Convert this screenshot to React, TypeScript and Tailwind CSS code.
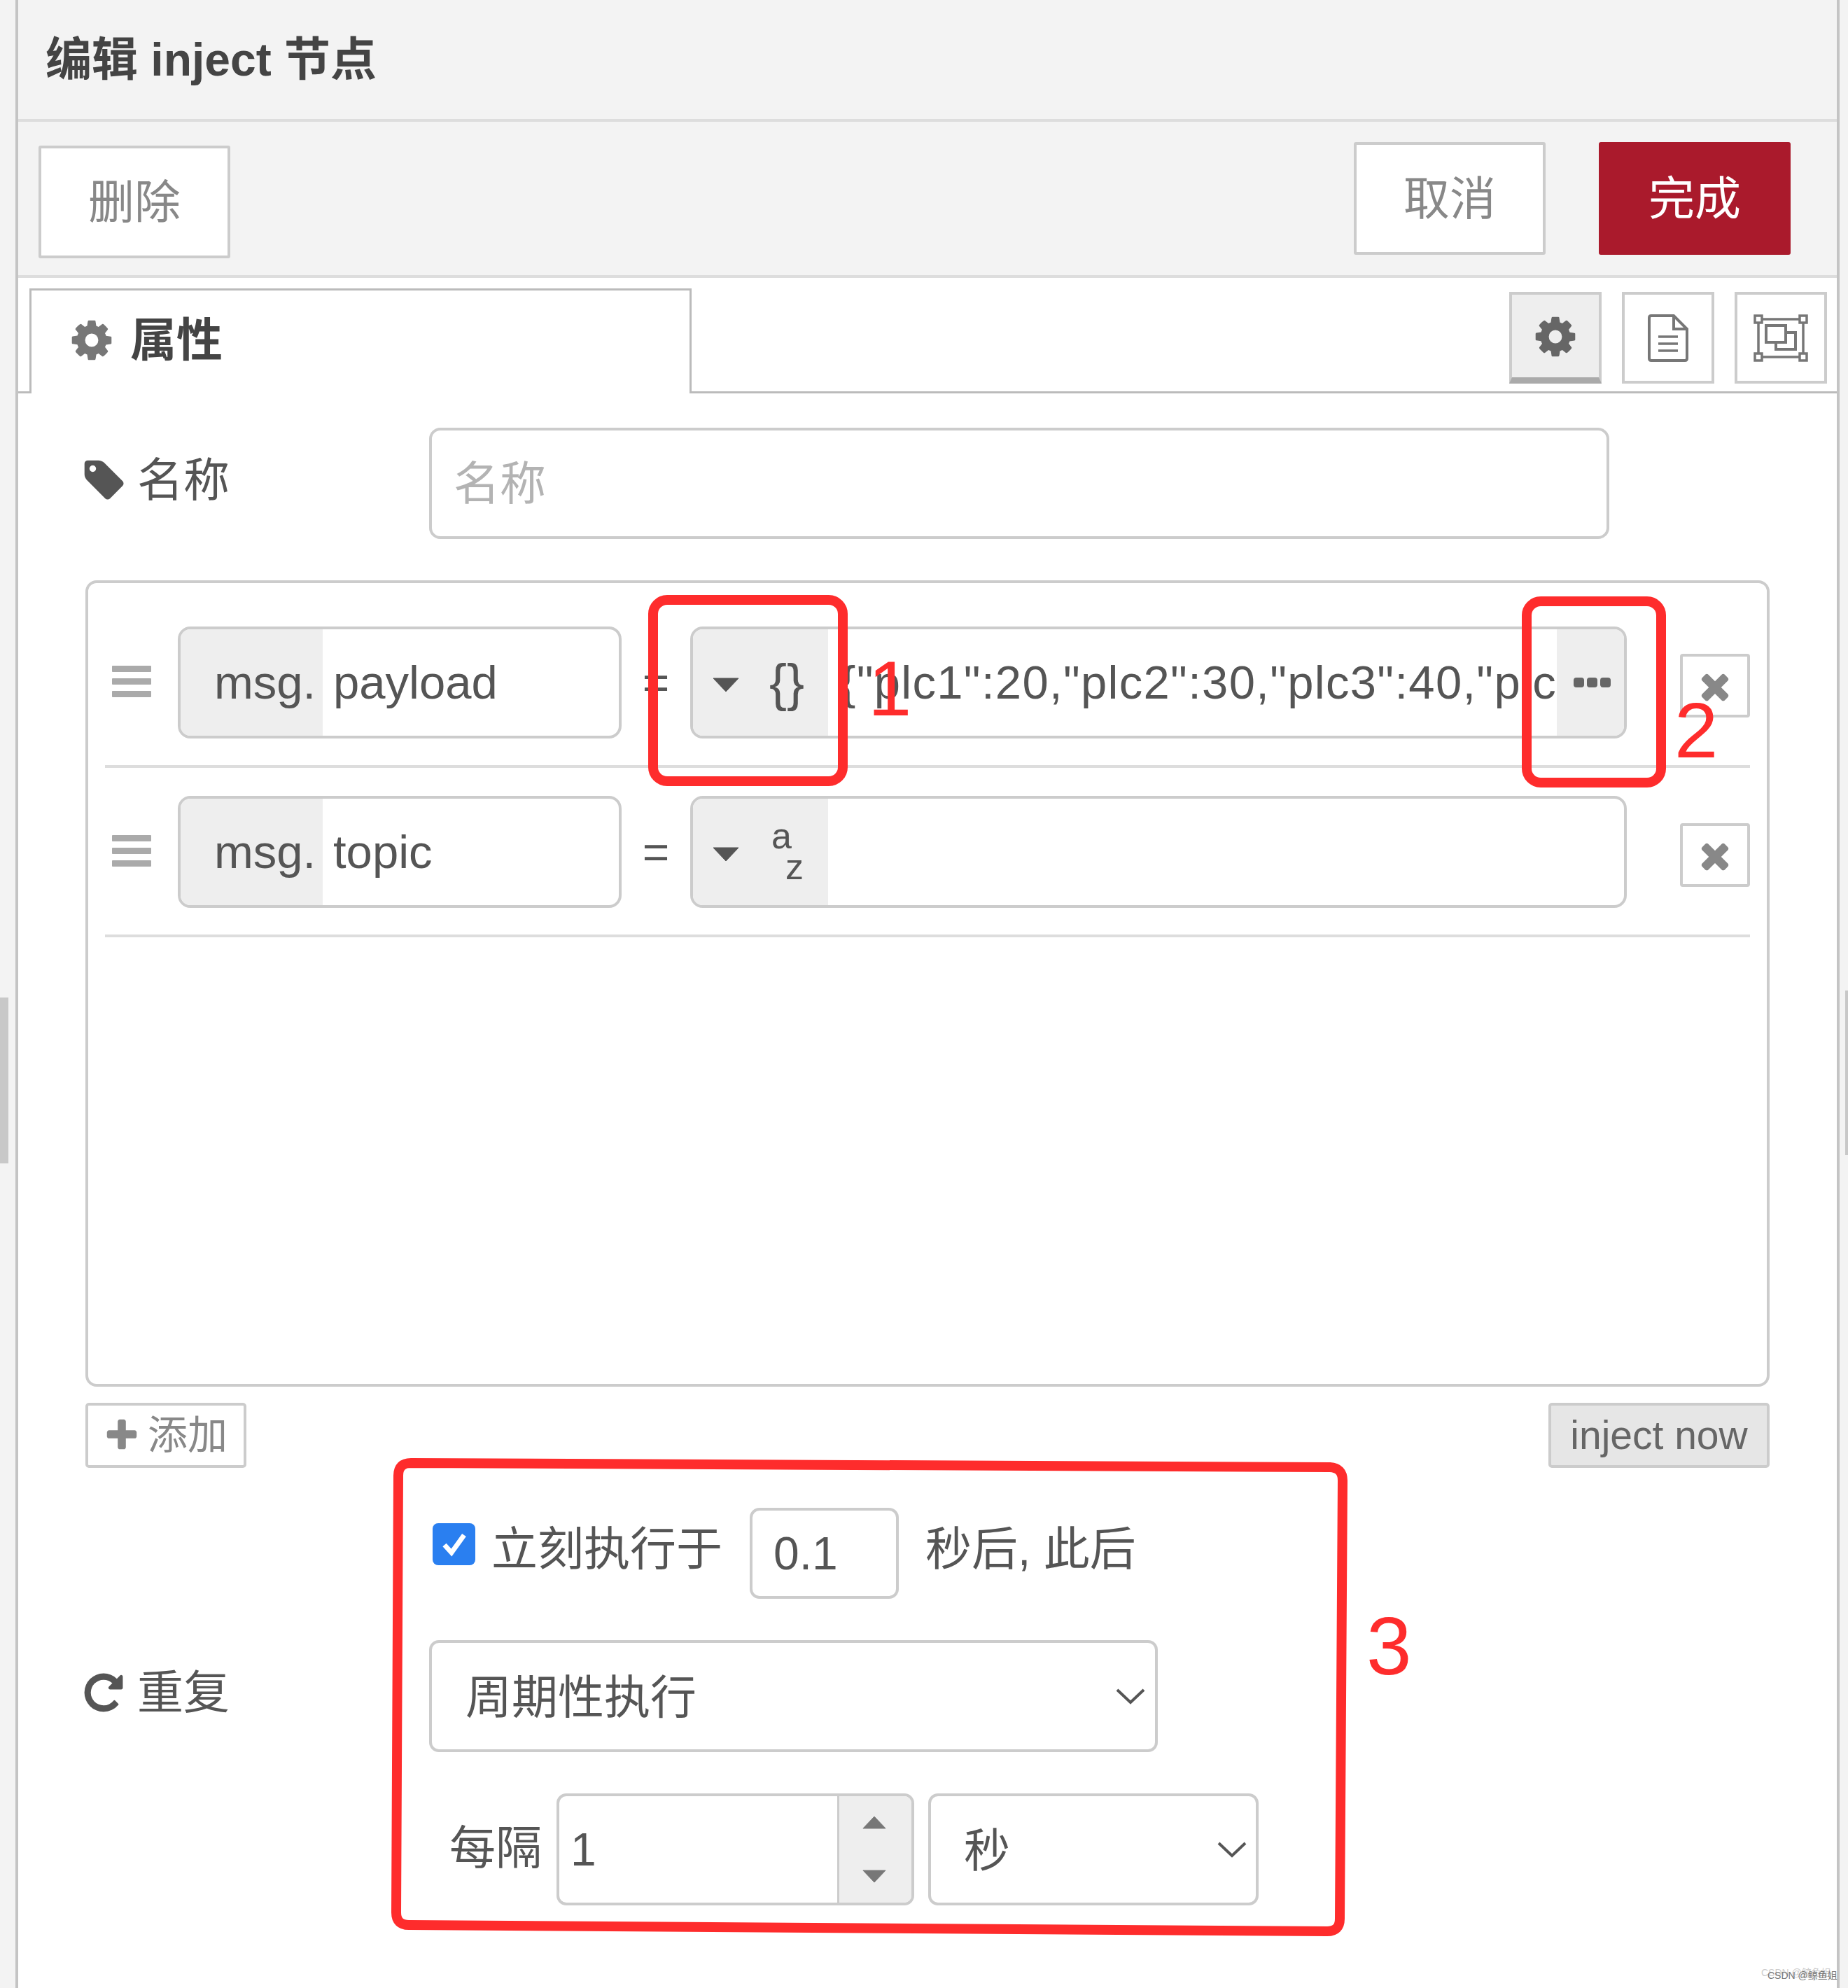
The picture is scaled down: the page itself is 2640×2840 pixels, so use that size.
import React from "react";

const COG = "M1152 896q0-106-75-181t-181-75-181 75-75 181 75 181 181 75 181-75 75-181zm512-109v222q0 12-8 23t-20 13l-185 28q-19 54-39 91 35 50 107 138 10 12 10 25t-9 23q-27 37-99 108t-94 71q-12 0-26-9l-138-108q-44 23-91 38-16 136-29 186-7 28-36 28h-222q-14 0-24.5-8.5t-11.5-21.5l-28-184q-49-16-90-37l-141 107q-10 9-25 9-14 0-25-11-126-114-165-168-7-10-7-23 0-12 8-23 15-21 51-66.5t54-70.5q-27-50-41-99l-183-27q-13-2-21-12.5t-8-23.5v-222q0-12 8-23t19-13l186-28q14-46 39-92-40-57-107-138-10-12-10-24 0-10 9-23 26-36 98.5-107.5t94.5-71.5q13 0 26 10l138 107q44-23 91-38 16-136 29-186 7-28 36-28h222q14 0 24.5 8.5t11.5 21.5l28 184q49 16 90 37l142-107q9-9 24-9 13 0 25 10 129 119 165 170 7 8 7 22 0 12-8 23-15 21-51 66.5t-54 70.5q26 50 41 98l183 28q13 2 21 12.5t8 23.5z";
const TAG = "M576 448q0-53-37.5-90.5t-90.5-37.5-90.5 37.5-37.5 90.5 37.5 90.5 90.5 37.5 90.5-37.5 37.5-90.5zm1067 576q0 53-37 90l-491 492q-39 37-91 37-53 0-90-37l-715-716q-38-37-64.5-101t-26.5-117v-416q0-52 38-90t90-38h416q53 0 117 26.5t102 64.5l715 714q37 39 37 91z";
const REPEAT = "M1664 256v448q0 26-19 45t-45 19h-448q-42 0-59-40-17-39 14-69l138-138q-148-137-349-137-104 0-198.5 40.5t-163.5 109.5-109.5 163.5-40.5 198.5 40.5 198.5 109.5 163.5 163.5 109.5 198.5 40.5q119 0 225-52t179-147q7-10 23-12 15 0 25 9l137 138q9 8 9.5 20.5t-7.5 22.5q-109 132-264 204.5t-327 72.5q-156 0-298-61t-245-164-164-245-61-298 61-298 164-245 245-164 298-61q147 0 284.5 55.5t244.5 156.5l130-129q29-31 70-14 39 17 39 59z";
const TIMES = "M1490 1322q0 40-28 68l-136 136q-28 28-68 28t-68-28l-294-294-294 294q-28 28-68 28t-68-28l-136-136q-28-28-28-68t28-68l294-294-294-294q-28-28-28-68t28-68l136-136q28-28 68-28t68 28l294 294 294-294q28-28 68-28t68 28l136 136q28 28 28 68t-28 68l-294 294 294 294q28 28 28 68z";
const PLUS = "M1600 736v192q0 40-28 68t-68 28h-416v416q0 40-28 68t-68 28h-192q-40 0-68-28t-28-68v-416h-416q-40 0-68-28t-28-68v-192q0-40 28-68t68-28h416v-416q0-40 28-68t68-28h192q40 0 68 28t28 68v416h416q40 0 68 28t28 68z";

function Fa({ d, size, color }: { d: string; size: number; color: string }) {
  return (
    <svg width={size} height={size} viewBox="0 0 1792 1792" fill={color} className="shrink-0">
      <path d={d} />
    </svg>
  );
}

function Caret({ up = false, color = "#555", w = 38, h = 21 }: { up?: boolean; color?: string; w?: number; h?: number }) {
  return (
    <svg width={w} height={h} viewBox="0 0 38 21" className="shrink-0">
      <path d={up ? "M19 1 L37 20 H1 Z" : "M1 1 H37 L19 20 Z"} fill={color} stroke={color} strokeWidth="1" strokeLinejoin="round" />
    </svg>
  );
}

function Chevron() {
  return (
    <svg width="42" height="24" viewBox="0 0 42 24" fill="none" className="shrink-0">
      <path d="M2 3 L21 21 L40 3" stroke="#555" strokeWidth="4" />
    </svg>
  );
}

function Handle() {
  return (
    <div className="ml-[10px] mt-[56px] flex w-[56px] shrink-0 flex-col gap-[9px]">
      <div className="h-[9px] rounded-[1px] bg-[#aaa]" />
      <div className="h-[9px] rounded-[1px] bg-[#aaa]" />
      <div className="h-[9px] rounded-[1px] bg-[#aaa]" />
    </div>
  );
}

function KeyInput({ name }: { name: string }) {
  return (
    <div className="ml-[38px] flex h-[160px] w-[634px] shrink-0 overflow-hidden rounded-[18px] border-[4px] border-[#ccc] bg-white text-[67px] leading-none text-[#555]">
      <div className="flex w-[203px] items-center bg-[#eee] pb-[2px] pl-[48px]">msg.</div>
      <div className="flex items-center pb-[2px] pl-[15px]">{name}</div>
    </div>
  );
}

function RemoveButton() {
  return (
    <div className="ml-[76px] mt-[39px] flex h-[91px] w-[100px] shrink-0 items-center justify-center rounded-[4px] border-[4px] border-[#ccc] bg-white">
      <Fa d={TIMES} size={58} color="#888" />
    </div>
  );
}

export default function App() {
  return (
    <div className="relative flex h-[2840px] w-[2640px] overflow-hidden bg-[#f3f3f3] font-['Liberation_Sans','Noto_Sans_CJK_SC',sans-serif]">
      {/* left gutter */}
      <div className="w-[22px] shrink-0 pt-[1425px]">
        <div className="h-[237px] w-[12px] bg-[#c8c8c8]" />
      </div>

      {/* panel */}
      <div className="flex h-full w-[2606px] shrink-0 flex-col border-x-[4px] border-x-[#c4c4c4] bg-white">
        {/* title */}
        <div className="flex h-[174px] shrink-0 items-center border-b-[4px] border-b-[#ddd] bg-[#f3f3f3] pl-[39px] text-[66px] font-bold leading-none text-[#444]">
          编辑 inject 节点
        </div>

        {/* toolbar */}
        <div className="flex h-[223px] shrink-0 items-start border-b-[4px] border-b-[#ddd] bg-[#f3f3f3] pl-[29px] pr-[66px] text-[66px] leading-none">
          <div className="mt-[34px] flex h-[161px] w-[274px] items-center justify-center rounded-[3px] border-[4px] border-[#ccc] bg-white text-[#888]">
            删除
          </div>
          <div className="ml-auto mt-[29px] flex h-[161px] w-[274px] items-center justify-center rounded-[3px] border-[4px] border-[#ccc] bg-white text-[#888]">
            取消
          </div>
          <div className="ml-[76px] mt-[29px] flex h-[161px] w-[274px] items-center justify-center rounded-[3px] bg-[#aa1a2c] text-white">
            完成
          </div>
        </div>

        {/* tabs */}
        <div className="flex h-[165px] shrink-0 items-start border-b-[3px] border-b-[#bbb] bg-white pl-[16px] pr-[14px]">
          <div className="mt-[15px] flex h-[150px] w-[946px] items-center border-x-[3px] border-t-[3px] border-[#bbb] bg-white pb-[6px] pl-[53px] text-[66px] font-bold leading-none text-[#444]">
            <Fa d={COG} size={66} color="#777" />
            <span className="ml-[22px]">属性</span>
          </div>
          <div className="ml-auto mt-[20px] flex gap-[29px]">
            <div className="flex h-[131px] w-[132px] items-center justify-center border-x-[4px] border-b-[9px] border-t-[4px] border-x-[#ccc] border-b-[#aaa] border-t-[#ccc] bg-[#eee] pt-[2px]">
              <Fa d={COG} size={66} color="#666" />
            </div>
            <div className="flex h-[131px] w-[132px] items-center justify-center border-[4px] border-[#ccc] bg-white">
              <svg width="60" height="68" viewBox="0 0 60 68" fill="none" stroke="#777" strokeWidth="4">
                <path d="M3 5 Q3 2 6 2 H38 L57 21 V63 Q57 66 54 66 H6 Q3 66 3 63 Z" />
                <path d="M38 2 V21 H57" />
                <path d="M16 32 H44 M16 42 H44 M16 52 H44" strokeWidth="3.5" />
              </svg>
            </div>
            <div className="flex h-[131px] w-[132px] items-center justify-center border-[4px] border-[#ccc] bg-white">
              <svg width="78" height="68" viewBox="0 0 78 68" fill="none" stroke="#777" strokeWidth="3.5">
                <rect x="2" y="2" width="10" height="10" />
                <rect x="66" y="2" width="10" height="10" />
                <rect x="2" y="56" width="10" height="10" />
                <rect x="66" y="56" width="10" height="10" />
                <path d="M12 7 H66 M12 61 H66 M7 12 V56 M71 12 V56" />
                <rect x="18" y="16" width="28" height="24" strokeWidth="4" />
                <path d="M46 26 H60 V50 H32 V40" strokeWidth="4" />
              </svg>
            </div>
          </div>
        </div>

        {/* name */}
        <div className="mt-[49px] flex h-[158px] shrink-0 items-start pl-[90px]">
          <div className="flex w-[497px] shrink-0 items-center pt-[42px] text-[66px] leading-none text-[#555]">
            <Fa d={TAG} size={66} color="#555" />
            <span className="ml-[14px]">名称</span>
          </div>
          <div className="flex h-[159px] w-[1686px] items-center rounded-[16px] border-[4px] border-[#ccc] bg-white pl-[31px] text-[66px] leading-none text-[#b3b3b3]">
            名称
          </div>
        </div>

        {/* property list */}
        <div className="ml-[96px] mt-[60px] h-[1152px] w-[2406px] shrink-0 rounded-[16px] border-[4px] border-[#ccc] bg-white px-[24px] pt-[22px]">
          <div className="flex h-[242px] items-start border-b-[4px] border-b-[#ddd] pt-[40px]">
            <Handle />
            <KeyInput name="payload" />
            <div className="flex h-[160px] w-[98px] shrink-0 items-center justify-center text-[66px] leading-none text-[#555]">=</div>
            <div className="flex h-[160px] w-[1338px] shrink-0 overflow-hidden rounded-[18px] border-[4px] border-[#ccc] bg-white text-[67px] leading-none text-[#555]">
              <div className="flex w-[193px] shrink-0 items-center bg-[#eee] pl-[28px]">
                <div className="mt-[6px]">
                  <Caret />
                </div>
                <span className="ml-[43px] text-[75px]">{"{}"}</span>
              </div>
              <div className="flex min-w-0 flex-1 items-center overflow-hidden whitespace-nowrap pb-[2px] pl-[17px] tracking-[1.3px]">
                {'{"plc1":20,"plc2":30,"plc3":40,"plc,'}
              </div>
              <div className="flex w-[96px] shrink-0 items-center justify-center gap-[4px] bg-[#eee] pl-[5px]">
                <div className="h-[14px] w-[15px] rounded-[4px] bg-[#666]" />
                <div className="h-[14px] w-[15px] rounded-[4px] bg-[#666]" />
                <div className="h-[14px] w-[15px] rounded-[4px] bg-[#666]" />
              </div>
            </div>
            <RemoveButton />
          </div>

          <div className="flex h-[242px] items-start border-b-[4px] border-b-[#ddd] pt-[40px]">
            <Handle />
            <KeyInput name="topic" />
            <div className="flex h-[160px] w-[98px] shrink-0 items-center justify-center text-[66px] leading-none text-[#555]">=</div>
            <div className="flex h-[160px] w-[1338px] shrink-0 overflow-hidden rounded-[18px] border-[4px] border-[#ccc] bg-white text-[66px] leading-none text-[#555]">
              <div className="flex w-[193px] shrink-0 items-center bg-[#eee] pl-[28px]">
                <div className="mt-[6px]">
                  <Caret />
                </div>
                <div className="ml-[46px] flex h-[84px] w-[46px] flex-col justify-between pb-[2px] text-[52px] leading-[38px]">
                  <span className="self-start">a</span>
                  <span className="self-end">z</span>
                </div>
              </div>
            </div>
            <RemoveButton />
          </div>
        </div>

        {/* list buttons */}
        <div className="ml-[96px] mt-[23px] flex w-[2406px] shrink-0 items-start justify-between text-[57px] leading-none">
          <div className="flex h-[93px] w-[230px] items-center rounded-[5px] border-[4px] border-[#ccc] bg-white pl-[21px] text-[#888]">
            <Fa d={PLUS} size={54} color="#888" />
            <span className="ml-[10px]">添加</span>
          </div>
          <div className="flex h-[93px] w-[316px] items-center justify-center rounded-[5px] border-[4px] border-[#ccc] bg-[#e6e6e6] text-[#666]">
            inject now
          </div>
        </div>

        {/* repeat */}
        <div className="flex shrink-0 items-center pl-[90px] text-[66px] leading-none text-[#555]">
          <div className="flex w-[497px] shrink-0 items-center pt-[16px]">
            <Fa d={REPEAT} size={64} color="#555" />
            <span className="ml-[16px]">重复</span>
          </div>
          <div className="flex flex-col pt-[57px]">
            <div className="flex h-[130px] items-center">
              <div className="mb-[27px] ml-[5px] flex h-[60px] w-[61px] items-center justify-center rounded-[8px] bg-[#2a7ff0]">
                <svg width="38" height="36" viewBox="0 0 38 36" fill="none">
                  <path d="M5 19 L15 30 L33 5" stroke="#fff" strokeWidth="7" />
                </svg>
              </div>
              <span className="mb-[12px] ml-[23px] w-[369px]">立刻执行于</span>
              <div className="flex h-[130px] w-[213px] items-center rounded-[14px] border-[4px] border-[#ccc] bg-white pl-[30px]">0.1</div>
              <span className="mb-[12px] ml-[38px]">秒后, 此后</span>
            </div>

            <div className="mt-[59px] flex h-[160px] w-[1041px] items-center justify-between rounded-[14px] border-[4px] border-[#ccc] bg-white pl-[48px] pr-[14px]">
              <span className="pt-[4px]">周期性执行</span>
              <Chevron />
            </div>

            <div className="mt-[59px] flex h-[160px] items-center">
              <span className="mb-[5px] ml-[29px] w-[153px] shrink-0">每隔</span>
              <div className="flex h-[160px] w-[511px] shrink-0 overflow-hidden rounded-[14px] border-[4px] border-[#ccc] bg-white">
                <div className="flex flex-1 items-center pl-[16px]">1</div>
                <div className="flex w-[106px] flex-col items-center justify-between border-l-[3px] border-l-[#ccc] bg-[#eee] pb-[28px] pr-[4px] pt-[28px]">
                  <Caret up color="#777" w={34} h={19} />
                  <Caret color="#777" w={34} h={19} />
                </div>
              </div>
              <div className="ml-[20px] flex h-[160px] w-[472px] shrink-0 items-center justify-between rounded-[14px] border-[4px] border-[#ccc] bg-white pl-[47px] pr-[13px]">
                <span className="pt-[3px]">秒</span>
                <Chevron />
              </div>
            </div>
          </div>
        </div>
      </div>

      {/* right gutter */}
      <div className="flex flex-1 justify-end pt-[1415px]">
        <div className="h-[235px] w-[4px] bg-[#c8c8c8]" />
      </div>

      {/* hand-drawn annotations lying over the form */}
      <svg className="pointer-events-none absolute left-0 top-0" width="2640" height="2840" viewBox="0 0 2640 2840" fill="none" stroke="#fe2c2c" strokeWidth="14">
        <rect x="933" y="857" width="271" height="259" rx="20" />
        <rect x="2181" y="859" width="192" height="259" rx="20" />
        <path d="M587 2090 L1900 2096 Q1918 2097 1918 2115 L1914 2741 Q1914 2759 1896 2759 L584 2750 Q566 2750 566 2732 L569 2108 Q569 2090 587 2090 Z" />
      </svg>
      <span className="absolute left-[1240px] top-[920px] text-[112px] leading-[128px] text-[#fe2c2c]">1</span>
      <span className="absolute left-[2392px] top-[980px] text-[112px] leading-[128px] text-[#fe2c2c]">2</span>
      <span className="absolute left-[1952px] top-[2286px] text-[116px] leading-[132px] text-[#fe2c2c]">3</span>
      <span className="absolute left-[2525px] top-[2813px] whitespace-nowrap text-[14px] leading-[18px] text-[#777] [text-shadow:-9px_-4px_0_#ccc]">CSDN @鲸鱼姐</span>
    </div>
  );
}
